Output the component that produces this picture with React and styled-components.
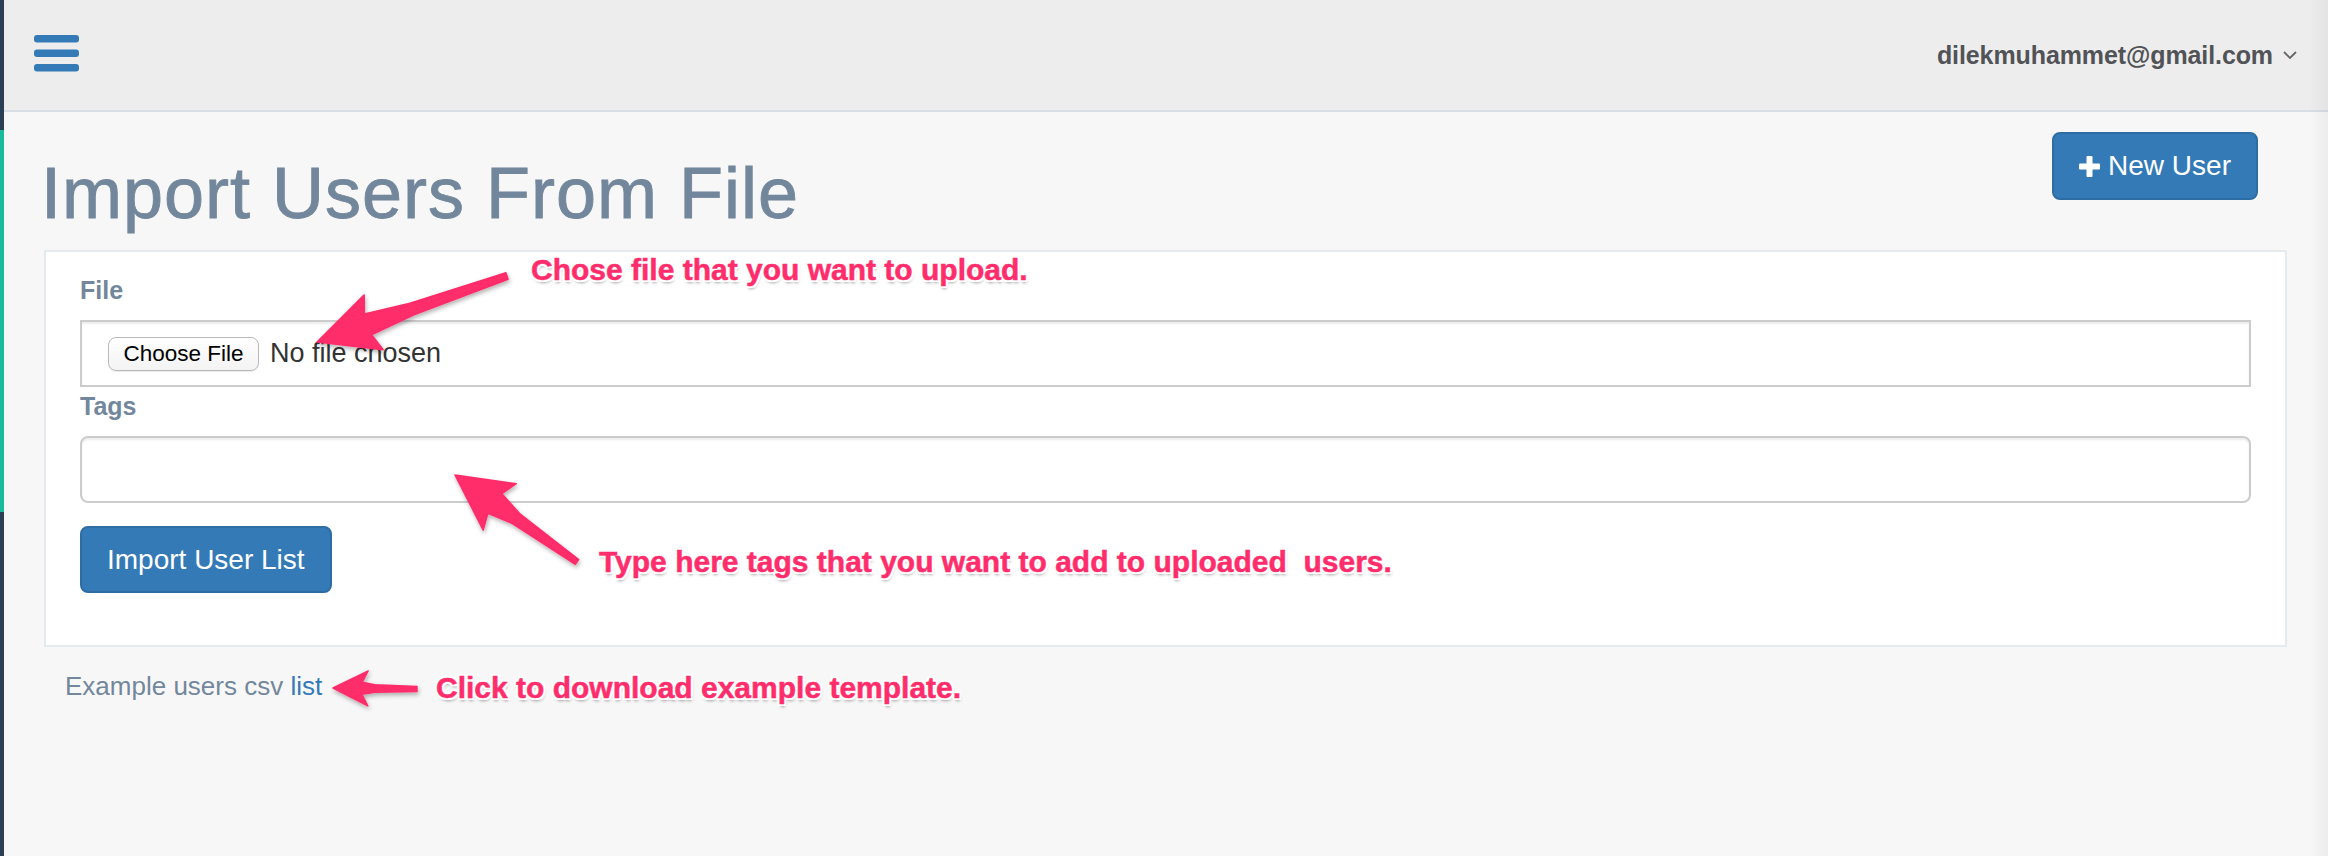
import React from "react";
import styled, { createGlobalStyle } from "styled-components";

const GlobalStyle = createGlobalStyle`
  html, body {
    margin: 0;
    padding: 0;
    background: #f7f7f7;
    font-family: "Liberation Sans", Arial, Helvetica, sans-serif;
  }
  * { box-sizing: border-box; }
`;

const Page = styled.div`
  position: relative;
  display: flex;
  min-height: 856px;
  width: 100%;
  overflow: hidden;
`;

const Sidebar = styled.aside`
  width: 4px;
  flex: 0 0 4px;
  display: flex;
  flex-direction: column;
`;

const SideSegment = styled.div`
  background: ${(p) => p.$color};
  height: ${(p) => (p.$h ? `${p.$h}px` : "auto")};
  flex: ${(p) => (p.$h ? "0 0 auto" : "1 1 auto")};
`;

const Main = styled.main`
  flex: 1 1 auto;
  min-width: 0;
  display: flex;
  flex-direction: column;
  background: #f7f7f7;
`;

const TopNav = styled.header`
  height: 112px;
  background: #ededed;
  border-bottom: 2px solid #d9dee4;
  display: flex;
  align-items: center;
  justify-content: space-between;
  padding: 0 31px 0 30px;
`;

const MenuToggle = styled.button`
  border: 0;
  background: transparent;
  padding: 0;
  margin: 0 0 3px 0;
  width: 45px;
  height: 37px;
  display: flex;
  cursor: pointer;
`;

const UserMenu = styled.div`
  display: flex;
  align-items: center;
  gap: 10px;
  font-size: 25px;
  line-height: 30px;
  font-weight: 700;
  color: #515356;
  letter-spacing: -0.1px;
`;

const Content = styled.div`
  padding: 0 41px 0 40px;
  display: flex;
  flex-direction: column;
`;

const TitleRow = styled.div`
  display: flex;
  justify-content: space-between;
  align-items: flex-start;
  padding-right: 29px;
`;

const Title = styled.h1`
  margin: 42px 0 0 -3px;
  font-size: 72px;
  line-height: 79px;
  font-weight: 400;
  letter-spacing: 1px;
  color: #73879c;
  -webkit-text-stroke: 0.9px #73879c;
`;

const PrimaryButton = styled.button`
  display: inline-flex;
  align-items: center;
  justify-content: center;
  gap: 8px;
  height: ${(p) => (p.$tall ? "68px" : "67px")};
  margin-top: ${(p) => p.$mt || 0}px;
  padding: 0 25px;
  background: #337ab7;
  border: 2px solid #2e6da4;
  border-radius: 8px;
  color: #fff;
  font-family: inherit;
  font-size: 28px;
  line-height: 1;
  cursor: pointer;
  align-self: flex-start;
`;

const Panel = styled.section`
  margin-top: 17px;
  background: #fff;
  border: 2px solid #e6e9ed;
  padding: 20px 34px;
  display: flex;
  flex-direction: column;
`;

const Label = styled.label`
  display: block;
  font-size: 25px;
  line-height: 36px;
  font-weight: 700;
  color: #73879c;
  margin: ${(p) => p.$mt || 0}px 0 12px;
`;

const FileField = styled.div`
  height: 67px;
  border: 2px solid #ccc;
  box-shadow: inset 0 2px 2px rgba(0, 0, 0, 0.075);
  display: flex;
  align-items: center;
  padding-left: 26px;
`;

const ChooseButton = styled.span`
  display: inline-flex;
  align-items: center;
  justify-content: center;
  width: 151px;
  height: 34px;
  border: 1px solid #b9b9b9;
  border-radius: 8px;
  background: linear-gradient(#ffffff, #f3f3f3);
  box-shadow: 0 1px 1px rgba(0, 0, 0, 0.08);
  font-size: 22.5px;
  color: #000;
`;

const FileStatus = styled.span`
  margin-left: 11px;
  font-size: 27px;
  color: #333;
`;

const TextInput = styled.input`
  height: 67px;
  border: 2px solid #ccc;
  border-radius: 8px;
  box-shadow: inset 0 2px 2px rgba(0, 0, 0, 0.075);
  padding: 0 24px;
  font-size: 28px;
  font-family: inherit;
  outline: none;
  margin-bottom: 23px;
  width: 100%;
`;

const PanelFooter = styled.div`
  height: 32px;
`;

const Footnote = styled.p`
  margin: 21px 0 0;
  padding-left: 21px;
  font-size: 26px;
  line-height: 37px;
  color: #73879c;
`;

const Link = styled.a`
  color: #337ab7;
  text-decoration: none;
`;

const ScrollShade = styled.div`
  position: absolute;
  top: 0;
  right: 0;
  bottom: 0;
  width: 20px;
  background: linear-gradient(to right, rgba(0, 0, 0, 0), rgba(0, 0, 0, 0.045));
  pointer-events: none;
`;

const AnnotationLayer = styled.svg`
  position: absolute;
  left: 0;
  top: 0;
  pointer-events: none;
`;

const AnnotationText = styled.span`
  position: absolute;
  left: ${(p) => p.$x}px;
  top: ${(p) => p.$y}px;
  font-size: 30px;
  line-height: 30px;
  font-weight: 700;
  white-space: pre;
  color: #ff2d6b;
  -webkit-text-stroke: 0.5px #ff2d6b;
  text-shadow: -2px -2px 0 #fff, 2px -2px 0 #fff, -2px 2px 0 #fff, 2px 2px 0 #fff,
    0 -2px 0 #fff, 0 2px 0 #fff, -2px 0 0 #fff, 2px 0 0 #fff,
    1px 3px 3px rgba(0, 0, 0, 0.35);
`;

function arrowPoints(tail, tip, { head, hw, neck, tailW }) {
  const [tx, ty] = tail;
  const [hx, hy] = tip;
  const dx = hx - tx;
  const dy = hy - ty;
  const L = Math.hypot(dx, dy);
  const ux = dx / L;
  const uy = dy / L;
  const nx = -uy;
  const ny = ux;
  const p = (a, n) => `${(tx + ux * a + nx * n).toFixed(1)},${(ty + uy * a + ny * n).toFixed(1)}`;
  return [
    p(0, tailW),
    p(L * 0.5, tailW + (neck - tailW) * 0.35),
    p(L - head + 6, neck),
    p(L - head, hw),
    p(L, 0),
    p(L - head, -hw),
    p(L - head + 6, -neck),
    p(L * 0.5, -(tailW + (neck - tailW) * 0.35)),
    p(0, -tailW),
  ].join(" ");
}

const arrows = [
  { tail: [507, 276], tip: [317, 342], head: 60, hw: 29, neck: 11, tailW: 3.5 },
  { tail: [577, 562], tip: [455, 475], head: 55, hw: 28.5, neck: 12, tailW: 3 },
  { tail: [417, 689], tip: [333, 688], head: 35, hw: 17.5, neck: 6, tailW: 2.5 },
];

function Hamburger() {
  return (
    <svg width="45" height="37" viewBox="0 0 45 37">
      <rect x="0" y="0" width="45" height="7.5" rx="3" fill="#337ab7" />
      <rect x="0" y="14.5" width="45" height="7.5" rx="3" fill="#337ab7" />
      <rect x="0" y="29" width="45" height="7.5" rx="3" fill="#337ab7" />
    </svg>
  );
}

function Chevron() {
  return (
    <svg width="14" height="8" viewBox="0 0 14 8">
      <polyline points="1,1 7,7 13,1" fill="none" stroke="#666" strokeWidth="1.8" />
    </svg>
  );
}

function PlusIcon() {
  return (
    <svg width="21" height="21" viewBox="0 0 21 21">
      <rect x="7.5" y="0" width="6" height="21" rx="1" fill="#fff" />
      <rect x="0" y="7.5" width="21" height="6" rx="1" fill="#fff" />
    </svg>
  );
}

export default function App() {
  return (
    <>
      <GlobalStyle />
      <Page>
        <Sidebar>
          <SideSegment $color="#2a3f54" $h={130} />
          <SideSegment $color="#1abb9c" $h={382} />
          <SideSegment $color="#2a3f54" />
        </Sidebar>
        <Main>
          <TopNav>
            <MenuToggle aria-label="Toggle menu">
              <Hamburger />
            </MenuToggle>
            <UserMenu>
              dilekmuhammet@gmail.com
              <Chevron />
            </UserMenu>
          </TopNav>
          <Content>
            <TitleRow>
              <Title>Import Users From File</Title>
              <PrimaryButton $tall $mt={20}>
                <PlusIcon />
                New User
              </PrimaryButton>
            </TitleRow>
            <Panel>
              <Label>File</Label>
              <FileField>
                <ChooseButton>Choose File</ChooseButton>
                <FileStatus>No file chosen</FileStatus>
              </FileField>
              <Label $mt={1}>Tags</Label>
              <TextInput type="text" />
              <PrimaryButton>Import User List</PrimaryButton>
              <PanelFooter />
            </Panel>
            <Footnote>
              Example users csv <Link href="#">list</Link>
            </Footnote>
          </Content>
        </Main>
        <ScrollShade />
        <AnnotationLayer width="2328" height="856" viewBox="0 0 2328 856">
          <defs>
            <filter id="arrowShadow" x="-20%" y="-20%" width="140%" height="140%">
              <feDropShadow dx="1" dy="2.5" stdDeviation="2" floodColor="#000" floodOpacity="0.3" />
            </filter>
          </defs>
          {arrows.map((a, i) => (
            <polygon
              key={i}
              points={arrowPoints(a.tail, a.tip, a)}
              fill="#ff2d6b"
              stroke="#ff2d6b"
              strokeWidth="1.5"
              strokeLinejoin="round"
              filter="url(#arrowShadow)"
            />
          ))}
        </AnnotationLayer>
        <AnnotationText $x={531} $y={255}>Chose file that you want to upload.</AnnotationText>
        <AnnotationText $x={599} $y={547}>{"Type here tags that you want to add to uploaded  users."}</AnnotationText>
        <AnnotationText $x={436} $y={673}>Click to download example template.</AnnotationText>
      </Page>
    </>
  );
}
